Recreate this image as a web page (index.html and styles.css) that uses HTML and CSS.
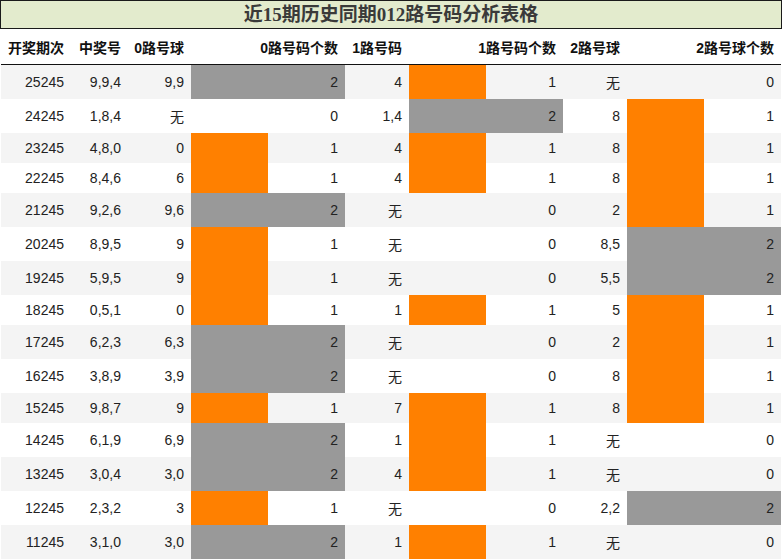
FILE: index.html
```html
<!DOCTYPE html>
<html lang="zh-CN">
<head>
<meta charset="utf-8">
<title>近15期历史同期012路号码分析表格</title>
<link rel="stylesheet" href="styles.css">
</head>
<body>
<div class="page">
  <div class="title">近15期历史同期012路号码分析表格</div>
  <table class="grid">
    <colgroup>
      <col class="w70"><col class="w57"><col class="w63"><col class="wbar">
      <col class="w64"><col class="wbar"><col class="w64"><col class="wbar">
    </colgroup>
    <thead>
      <tr>
        <th>开奖期次</th><th>中奖号</th><th>0路号球</th><th>0路号码个数</th>
        <th>1路号码</th><th>1路号码个数</th><th>2路号球</th><th>2路号球个数</th>
      </tr>
    </thead>
    <tbody>
      <tr><td>25245</td><td>9,9,4</td><td>9,9</td><td class="c2">2</td><td>4</td><td class="c1">1</td><td>无</td><td>0</td></tr>
      <tr><td>24245</td><td>1,8,4</td><td>无</td><td>0</td><td>1,4</td><td class="c2">2</td><td>8</td><td class="c1">1</td></tr>
      <tr><td>23245</td><td>4,8,0</td><td>0</td><td class="c1">1</td><td>4</td><td class="c1">1</td><td>8</td><td class="c1">1</td></tr>
      <tr><td>22245</td><td>8,4,6</td><td>6</td><td class="c1">1</td><td>4</td><td class="c1">1</td><td>8</td><td class="c1">1</td></tr>
      <tr><td>21245</td><td>9,2,6</td><td>9,6</td><td class="c2">2</td><td>无</td><td>0</td><td>2</td><td class="c1">1</td></tr>
      <tr><td>20245</td><td>8,9,5</td><td>9</td><td class="c1">1</td><td>无</td><td>0</td><td>8,5</td><td class="c2">2</td></tr>
      <tr><td>19245</td><td>5,9,5</td><td>9</td><td class="c1">1</td><td>无</td><td>0</td><td>5,5</td><td class="c2">2</td></tr>
      <tr><td>18245</td><td>0,5,1</td><td>0</td><td class="c1">1</td><td>1</td><td class="c1">1</td><td>5</td><td class="c1">1</td></tr>
      <tr><td>17245</td><td>6,2,3</td><td>6,3</td><td class="c2">2</td><td>无</td><td>0</td><td>2</td><td class="c1">1</td></tr>
      <tr><td>16245</td><td>3,8,9</td><td>3,9</td><td class="c2">2</td><td>无</td><td>0</td><td>8</td><td class="c1">1</td></tr>
      <tr><td>15245</td><td>9,8,7</td><td>9</td><td class="c1">1</td><td>7</td><td class="c1">1</td><td>8</td><td class="c1">1</td></tr>
      <tr><td>14245</td><td>6,1,9</td><td>6,9</td><td class="c2">2</td><td>1</td><td class="c1">1</td><td>无</td><td>0</td></tr>
      <tr><td>13245</td><td>3,0,4</td><td>3,0</td><td class="c2">2</td><td>4</td><td class="c1">1</td><td>无</td><td>0</td></tr>
      <tr><td>12245</td><td>2,3,2</td><td>3</td><td class="c1">1</td><td>无</td><td>0</td><td>2,2</td><td class="c2">2</td></tr>
      <tr><td>11245</td><td>3,1,0</td><td>3,0</td><td class="c2">2</td><td>1</td><td class="c1">1</td><td>无</td><td>0</td></tr>
    </tbody>
  </table>
</div>
</body>
</html>
```
FILE: styles.css
```css
html, body {
  margin: 0;
  padding: 0;
  background: #ffffff;
}

.page {
  width: 782px;
  font-family: "Liberation Sans", "Noto Sans CJK SC", sans-serif;
  font-size: 14px;
  color: #222222;
}

.title {
  box-sizing: border-box;
  height: 29px;
  line-height: 27px;
  border: 1px solid #1a1a1a;
  background: #e3ebcd;
  text-align: center;
  font-family: "Liberation Serif", "Noto Sans CJK SC", serif;
  font-weight: bold;
  font-size: 19px;
  color: #3a3a3a;
}

.grid {
  table-layout: fixed;
  width: 780px;
  margin: 0 0 0 1px;
  border-collapse: collapse;
  border-spacing: 0;
}

.w70 { width: 70px; }
.w57 { width: 57px; }
.w63 { width: 63px; }
.w64 { width: 64px; }
.wbar { width: 154px; }

.grid th {
  height: 35px;
  padding: 0 7px 0 0;
  text-align: right;
  vertical-align: middle;
  font-weight: bold;
  color: #111111;
  white-space: nowrap;
  border-bottom: 1px solid #111111;
}

.grid td {
  padding: 7px 7px 7px 0;
  text-align: right;
  vertical-align: middle;
  white-space: nowrap;
}

.grid tbody tr:nth-child(odd) {
  background: #f4f4f4;
}

.grid td.c1 {
  background-image: linear-gradient(#ff8000, #ff8000);
  background-repeat: no-repeat;
  background-position: 0 0;
  background-size: 50% 100%;
}

.grid td.c2 {
  background-color: #999999;
}
```
